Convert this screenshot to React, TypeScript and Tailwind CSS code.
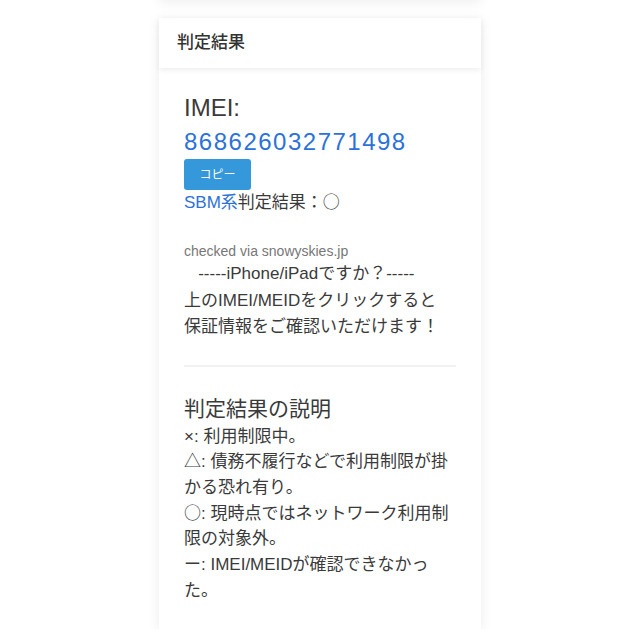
import React from 'react';

const cjk = { fontFamily: '"Noto Sans CJK JP", sans-serif' };

const descLines: [string, string, boolean][] = [
  ['×', ': 利用制限中。', false],
  ['△', ': 債務不履行などで利用制限が掛かる恐れ有り。', true],
  ['○', ': 現時点ではネットワーク利用制限の対象外。', true],
  ['ー', ': IMEI/MEIDが確認できなかった。', true],
];

export default function App() {
  return (
    <div
      className="min-h-[640px] bg-white text-[#3a3a3a]"
      style={{ fontFamily: '"Liberation Sans", "Noto Sans CJK JP", sans-serif' }}
    >
      <div className="mx-auto w-[322px]">
        {/* previous card, scrolled out of view */}
        <div className="-mt-[40px] h-[40px] bg-white shadow-[0_2px_12px_rgba(0,0,0,0.07)]" />

        <div className="mt-[18px] bg-white shadow-[0_2px_12px_rgba(0,0,0,0.08)]">
          <div className="relative z-10 flex h-[50px] items-center px-[18px] shadow-[0_2px_6px_rgba(0,0,0,0.07)]">
            <h2 className="text-[17px] font-medium text-[#333]">判定結果</h2>
          </div>

          <div className="px-[25px] pb-[26px] pt-[23px]">
            <div className="text-[24px] leading-[34px]">IMEI:</div>
            <a className="block text-[24px] leading-[34px] tracking-[1.5px] text-[#2c72d8]">
              868626032771498
            </a>
            <button className="h-[31px] w-[67px] rounded-[3px] bg-[#3498db] text-[12px] text-white">
              コピー
            </button>
            <div className="text-[17px] leading-[26px]">
              <span className="text-[#2c72d8]">SBM系</span>判定結果：
              <span className="leading-none" style={cjk}>○</span>
            </div>

            <div className="mt-[25px] text-[14px] leading-[20px] text-[#777]">checked via snowyskies.jp</div>
            <p className="text-[17px] leading-[26.5px]">
              {'\u00a0\u00a0\u00a0'}-----iPhone/iPadですか？-----
              <br />
              上のIMEI/MEIDをクリックすると
              <br />
              保証情報をご確認いただけます！
            </p>

            <hr className="mt-[24px] border-t-2 border-[#f2f2f2]" />

            <h3 className="mt-[27px] text-[21px] leading-[30px]">判定結果の説明</h3>
            <div className="text-[17px] leading-[25.7px]">
              {descLines.map(([mark, text, useCjk]) => (
                <div key={mark}>
                  <span className="leading-none" style={useCjk ? cjk : undefined}>
                    {mark}
                  </span>
                  {text}
                </div>
              ))}
            </div>
          </div>
        </div>
      </div>
    </div>
  );
}
